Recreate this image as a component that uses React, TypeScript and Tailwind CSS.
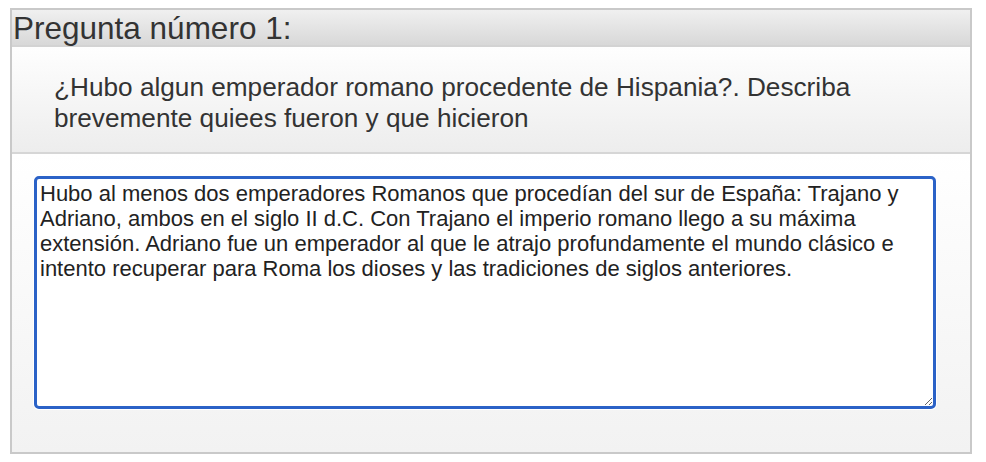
import { useEffect, useRef } from "react";

const answer =
    "Hubo al menos dos emperadores Romanos que procedían del sur de España: Trajano y Adriano, ambos en el siglo II d.C. Con Trajano el imperio romano llego a su máxima extensión. Adriano fue un emperador al que le atrajo profundamente el mundo clásico e intento recuperar para Roma los dioses y las tradiciones de siglos anteriores.";

export default function App() {
    const ref = useRef<HTMLTextAreaElement>(null);

    useEffect(() => {
        // put the caret at the end of the answer
        const el = ref.current;
        if (!el) return;
        el.focus();
        el.setSelectionRange(el.value.length, el.value.length);
    }, []);

    return (
        <div className="w-[986px] h-[462px] bg-white pt-[8px] pl-[10px] font-['Liberation_Sans',Arial,sans-serif]">
            <div className="w-[962px] h-[446px] border-2 border-[#c9c9c9] flex flex-col">
                <div className="h-[37px] bg-gradient-to-b from-[#f0f0f0] to-[#d8d8d8] border-b-2 border-[#d3d3d3] flex items-center">
                    <h2 className="text-[31.5px] leading-none text-[#333] pl-[1px] pt-[3px]">Pregunta número 1:</h2>
                </div>
                <div className="h-[107px] bg-gradient-to-b from-[#fefefe] to-[#ededed] border-b-2 border-[#d6d6d6] pl-[42px] pt-[25px] pr-[40px]">
                    <p className="text-[26.2px] leading-[31px] text-[#333]">
                        ¿Hubo algun emperador romano procedente de Hispania?. Describa brevemente quiees fueron y que hicieron
                    </p>
                </div>
                <div className="flex-1 bg-gradient-to-b from-white to-[#f2f2f2] pl-[22px] pt-[22px] pr-[34px]">
                    <textarea
                        ref={ref}
                        defaultValue={answer}
                        className="block w-[902px] h-[233px] bg-white border-[3px] border-[#2b62c7] rounded-[5px] outline-none px-[3px] pt-[2px] text-[22px] leading-[25px] text-[#222] caret-black shadow-[0_0_0_1px_#ffffff] font-['Liberation_Sans',Arial,sans-serif]"
                    />
                </div>
            </div>
        </div>
    );
}
